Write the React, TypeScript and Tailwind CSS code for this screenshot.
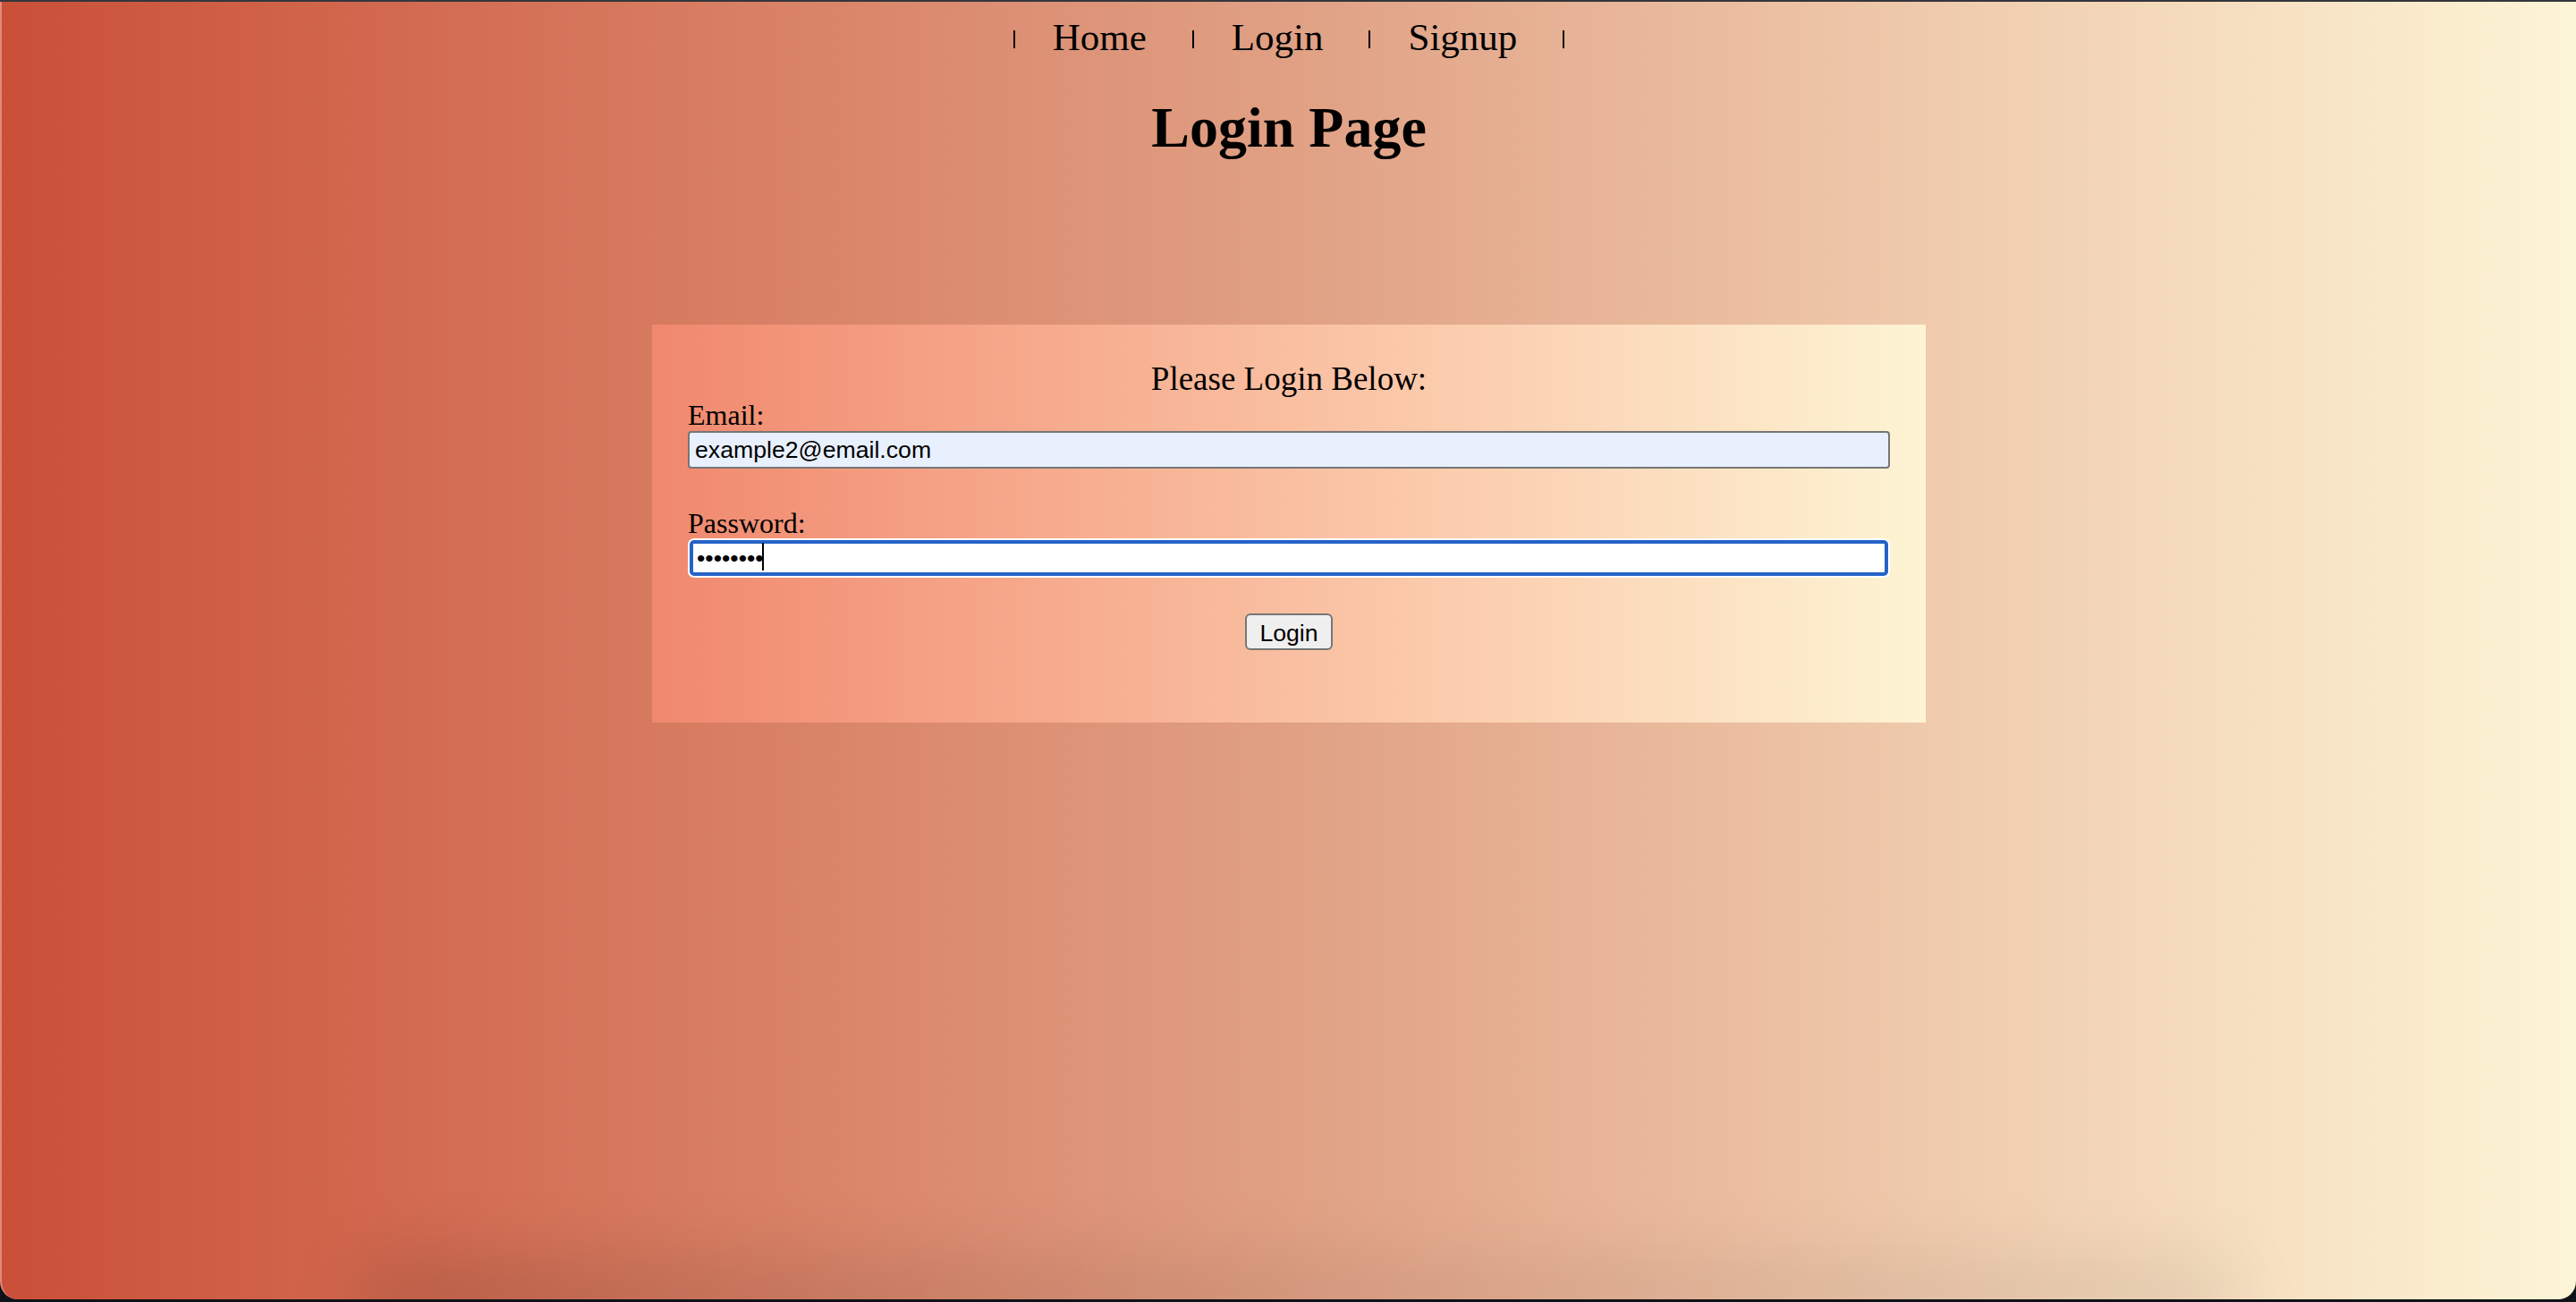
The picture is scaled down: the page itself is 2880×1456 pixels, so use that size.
import React from 'react'

const serif = "font-['Liberation_Serif','Times_New_Roman',serif]"
const sans = "font-['Liberation_Sans',Arial,sans-serif]"

function NavBar(): JSX.Element {
  const links = ['Home', 'Login', 'Signup']
  return (
    <nav className={`flex items-start justify-center pt-[16px] text-[43px] leading-[48px] text-black ${serif}`}>
      {links.map(link => (
        <React.Fragment key={link}>
          <span className="mt-[16px] h-[20px] w-[2px] bg-black" />
          <a href="#" className="ml-[42px] mr-[51px]">
            {link}
          </a>
        </React.Fragment>
      ))}
      <span className="mt-[16px] h-[20px] w-[2px] bg-black" />
    </nav>
  )
}

function LoginForm(): JSX.Element {
  return (
    <form
      onSubmit={e => e.preventDefault()}
      className="mx-auto mt-[184px] flex h-[445px] w-[1424px] flex-col bg-gradient-to-r from-[#f0886e] to-[#fcf4d4] px-[40px] pt-[40px] text-black"
    >
      <p className={`text-center text-[37px] leading-[42px] ${serif}`}>Please Login Below:</p>

      {/* Email */}
      <label className={`mt-px text-[32px] leading-[36px] ${serif}`}>Email:</label>
      <input
        type="email"
        readOnly
        value="example2@email.com"
        className={`h-[42px] w-full rounded-[4px] border-2 border-[#767676] bg-[#e8f0fe] px-[6px] text-[26.67px] text-black outline-none ${sans}`}
      />

      {/* Password */}
      <label className={`mt-[43px] text-[32px] leading-[36px] ${serif}`}>Password:</label>
      <div className="relative mt-[-1px] rounded-[7px] bg-white p-[2px]">
        <input
          type="password"
          readOnly
          value="password"
          className={`h-[40px] w-full rounded-[5px] border-[4px] border-[#2563c8] bg-white px-[4px] text-[26.67px] text-black outline-none ${sans}`}
        />
        <span className="absolute left-[83px] top-[5px] h-[31px] w-[2px] bg-black" />
      </div>

      <div className="mt-[40px] flex justify-center">
        <button
          type="submit"
          className={`h-[41px] w-[98px] rounded-[6px] border-2 border-[#767676] bg-[#efefef] text-[26.67px] text-black ${sans}`}
        >
          Login
        </button>
      </div>
    </form>
  )
}

export default function App(): JSX.Element {
  return (
    <div className="flex h-[1456px] w-[2880px] flex-col overflow-hidden bg-[#0f1218]">
      {/* window top edge */}
      <div className="h-[2px] bg-[#35363c]" />

      {/* Page */}
      <div className="relative h-[1451px] overflow-hidden rounded-b-[20px] border-l-2 border-[#e08a78] bg-gradient-to-r from-[#ca4f38] via-[#e0a084] to-[#fcf5d6]">
        <NavBar />
        <h1 className={`mt-[41px] text-center text-[64px] font-bold leading-[72px] text-black ${serif}`}>Login Page</h1>
        <LoginForm />

        {/* dock shadow */}
        <div className="pointer-events-none absolute -bottom-[36px] left-[400px] h-[76px] w-[2100px] rounded-full bg-gradient-to-r from-black/15 via-black/8 to-black/8 blur-2xl" />
      </div>
    </div>
  )
}
